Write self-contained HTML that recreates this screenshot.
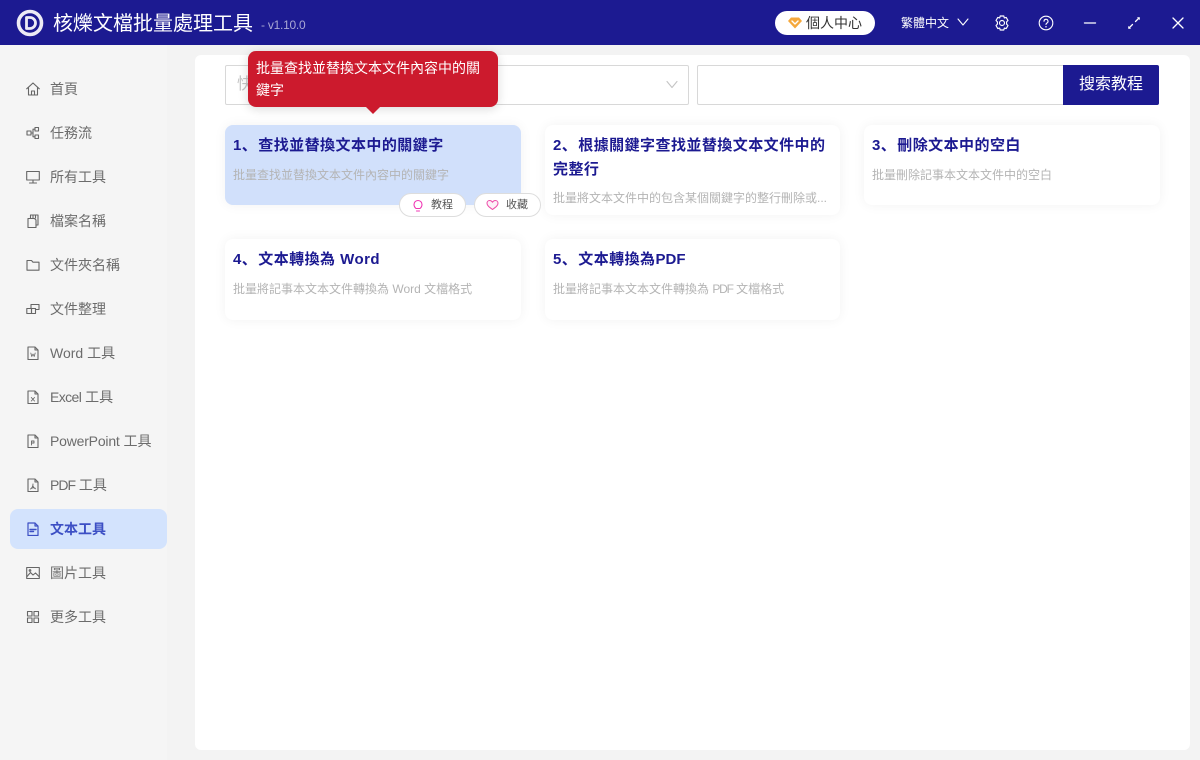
<!DOCTYPE html>
<html lang="zh-CN"><head><meta charset="utf-8"><title>核爍文檔批量處理工具</title>
<style>
*{box-sizing:border-box;margin:0;padding:0}
html,body{width:1200px;height:760px;overflow:hidden}
body{position:relative;background:#f3f3f3;font-family:"Liberation Sans","Noto Sans CJK SC","Noto Sans CJK TC",sans-serif;color:#666}
.a{position:absolute;white-space:nowrap}
svg{position:absolute;fill:none;stroke-linecap:round;stroke-linejoin:round}
#top{left:0;top:0;width:1200px;height:45px;background:#1c1a91}
.nav{position:absolute;left:50px;font-size:14px;line-height:20px;color:#6c6c6c;white-space:nowrap}
.ic{stroke:#666;stroke-width:1.1}
#main{left:195px;top:55px;width:995px;height:695px;background:#fff;border-radius:6px}
.card{position:absolute;background:#fff;border-radius:8px;box-shadow:0 0 12px rgba(0,0,0,.055);width:296px;height:81px}
.t{position:absolute;left:233px;font-size:15px;font-weight:700;line-height:24px;color:#1c1a91;white-space:nowrap;letter-spacing:.45px}
.t i{font-style:normal;margin-right:1px}
.d{position:absolute;font-size:12px;line-height:18px;color:#b4b4b4;white-space:nowrap}
.pill{position:absolute;top:193px;height:24px;background:#fff;border:1px solid #ddd;border-radius:12px;font-size:11px;line-height:22px;color:#555}
</style></head><body>
<div class="a" style="left:0;top:45px;width:167px;height:715px;background:#f5f5f5"></div>
<div class="a" id="top"></div>
<svg style="left:15px;top:8px" width="30" height="30" viewBox="0 0 30 30"><circle cx="15" cy="15" r="11.500" stroke="#ecebf5" stroke-width="3.600"/><path d="M11.500 9.500h3.500a5.500 5.500 0 0 1 0 11h-3.500z" stroke="#ecebf5" stroke-width="2.800"/></svg>
<div class="a" style="left:53px;top:9px;font-size:20px;line-height:30px;color:#fff">核爍文檔批量處理工具</div>
<div class="a" style="left:261px;top:16px;font-size:12px;line-height:18px;color:#a9a8d4;letter-spacing:-.25px">- v1.10.0</div>
<div class="a" style="left:775px;top:11px;width:100px;height:24px;background:#fff;border-radius:12px"></div>
<svg style="left:787px;top:16px" width="16" height="14" viewBox="0 0 16 14"><path d="M4 1.500h8L15 5 8 12.500 1 5z" fill="#f5a83c"/><path d="M5 5l3 3 3-3" stroke="#fff" stroke-width="1.400"/></svg>
<div class="a" style="left:806px;top:13px;font-size:14px;line-height:20px;color:#333">個人中心</div>
<div class="a" style="left:901px;top:14px;font-size:12px;line-height:18px;color:#fff">繁體中文</div>
<svg style="left:957px;top:17px" width="12" height="10" viewBox="0 0 12 10"><path d="M1 2l5 6 5-6" stroke="#fff" stroke-width="1.100"/></svg>
<svg style="left:993px;top:14px" width="18" height="18" viewBox="0 0 18 18" stroke="#fff" stroke-width="1.150"><path d="M7.200 2h3.600l.5 1.900 1.900-.5 1.800 3.100-1.400 1.400v2.200l1.400 1.400-1.800 3.100-1.900-.5-.5 1.900H7.200l-.5-1.900-1.900.5L3 11.500l1.400-1.400V7.900L3 6.500l1.800-3.100 1.900.5z"/><circle cx="9" cy="9" r="2.500"/></svg>
<svg style="left:1038px;top:15px" width="16" height="16" viewBox="0 0 16 16" stroke="#fff" stroke-width="1.100"><circle cx="8" cy="8" r="6.800"/><path d="M6 6.300a2 2 0 1 1 3 1.700c-.7.400-1 .8-1 1.500"/><path d="M8 11.700v.1" stroke-width="1.500"/></svg>
<svg style="left:1083px;top:16px" width="14" height="14" viewBox="0 0 14 14"><path d="M1.500 7h11" stroke="#dcdcf0" stroke-width="1.400"/></svg>
<svg style="left:1127px;top:16px" width="14" height="14" viewBox="0 0 14 14"><path d="M2 12l3.500-3.500M8.500 5.500L12 2" stroke="#fff" stroke-width="1.300"/><path d="M1.500 10.500v2h2z M12.500 3.500v-2h-2z" fill="#fff" stroke="#fff" stroke-width=".6"/></svg>
<svg style="left:1171px;top:16px" width="14" height="14" viewBox="0 0 14 14"><path d="M2 2l10 10M12 2L2 12" stroke="#fff" stroke-width="1.300"/></svg>

<div class="a" style="left:10px;top:509px;width:157px;height:40px;background:#d3e3fd;border-radius:8px"></div>
<div class="nav" style="top:79px">首頁</div>
<div class="nav" style="top:123px">任務流</div>
<div class="nav" style="top:167px">所有工具</div>
<div class="nav" style="top:211px">檔案名稱</div>
<div class="nav" style="top:255px">文件夾名稱</div>
<div class="nav" style="top:299px">文件整理</div>
<div class="nav" style="top:343px">Word 工具</div>
<div class="nav" style="top:387px"><span style="letter-spacing:-.6px">Excel</span> 工具</div>
<div class="nav" style="top:431px"><span style="letter-spacing:-.2px">PowerPoint</span> 工具</div>
<div class="nav" style="top:475px"><span style="letter-spacing:-1px">PDF</span> 工具</div>
<div class="nav" style="top:519px;color:#3c4fc4;font-weight:700">文本工具</div>
<div class="nav" style="top:563px">圖片工具</div>
<div class="nav" style="top:607px">更多工具</div>

<svg class="ic" style="left:26px;top:82px" width="14" height="14" viewBox="0 0 14 14"><path d="M.7 6.800L7 1l6.300 5.800M2.500 5.500v7.500h9V5.500M5.500 13V9h3v4"/></svg>
<svg class="ic" style="left:26px;top:126px" width="14" height="14" viewBox="0 0 14 14"><rect x="1" y="5" width="4" height="4"/><rect x="9" y="1.500" width="3.500" height="3.500"/><rect x="9" y="9" width="3.500" height="3.500"/><path d="M5 7h2V3.200h2M7 7v3.800h2"/></svg>
<svg class="ic" style="left:26px;top:170px" width="14" height="14" viewBox="0 0 14 14"><rect x=".7" y="1.500" width="12.600" height="8.500"/><path d="M7 10v3M3.500 13h7"/></svg>
<svg class="ic" style="left:26px;top:214px" width="14" height="14" viewBox="0 0 14 14"><path d="M2 4.500h6.500l1.500 1.500v7.500H2zM4.500 4.500V1h7.500v10h-2M7 1v3M9.500 1v3"/></svg>
<svg class="ic" style="left:26px;top:258px" width="14" height="14" viewBox="0 0 14 14"><path d="M1 2.500h4.500L7 4.200h6v8H1z"/></svg>
<svg class="ic" style="left:26px;top:302px" width="14" height="14" viewBox="0 0 14 14"><rect x=".8" y="6.500" width="4.700" height="5"/><rect x="5.500" y="6.500" width="4" height="5"/><path d="M5 6.500V2.500h8v5h-3.500"/></svg>
<svg class="ic" style="left:26px;top:346px" width="14" height="14" viewBox="0 0 14 14"><path d="M2 1h7l3 3v9.500H2zM9 1v3h3"/><path d="M4.800 7l1 3.500L7 8l1.200 2.500L9.200 7" stroke-width=".8"/></svg>
<svg class="ic" style="left:26px;top:390px" width="14" height="14" viewBox="0 0 14 14"><path d="M2 1h7l3 3v9.500H2zM9 1v3h3"/><path d="M5.300 7.500l3.200 3.500M8.500 7.500L5.300 11" stroke-width=".9"/></svg>
<svg class="ic" style="left:26px;top:434px" width="14" height="14" viewBox="0 0 14 14"><path d="M2 1h7l3 3v9.500H2zM9 1v3h3"/><path d="M5.500 11V7h2.500v2H5.500" stroke-width=".9"/></svg>
<svg class="ic" style="left:26px;top:478px" width="14" height="14" viewBox="0 0 14 14"><path d="M2 1h7l3 3v9.500H2zM9 1v3h3"/><path d="M7 6c0 2-1 4-2.500 5M7 8c.5 1.500 1.500 2.500 2.500 2.800M5 10.500c1-.500 3-.800 4-.500" stroke-width=".9"/></svg>
<svg style="left:26px;top:522px;stroke:#3c4fc4;stroke-width:1.200" width="14" height="14" viewBox="0 0 14 14"><path d="M2 1h7l3 3v9.500H2zM9 1v3h3"/><path d="M4 7.500h6M4 9.500h3.500" stroke-width="1.400"/></svg>
<svg class="ic" style="left:26px;top:566px" width="14" height="14" viewBox="0 0 14 14"><rect x=".7" y="1.500" width="12.600" height="11"/><path d="M1 10.500l3.500-4 2.500 2.500 2.500-2 3.500 3.500"/><circle cx="4" cy="4.500" r=".8"/></svg>
<svg class="ic" style="left:26px;top:610px" width="14" height="14" viewBox="0 0 14 14"><rect x="1.500" y="1.500" width="4.500" height="4.500"/><rect x="8" y="1.500" width="4.500" height="4.500"/><rect x="1.500" y="8" width="4.500" height="4.500"/><rect x="8" y="8" width="4.500" height="4.500"/></svg>

<div class="a" id="main"></div>
<div class="a" style="left:225px;top:65px;width:464px;height:40px;border:1px solid #d8d8d8;border-radius:2px"></div>
<div class="a" style="left:237px;top:74px;font-size:16px;line-height:22px;color:#c4c4c4">快</div>
<svg style="left:666px;top:80px" width="12" height="10" viewBox="0 0 12 10"><path d="M1 1.500l5 6 5-6" stroke="#c4c4c4" stroke-width="1.100"/></svg>
<div class="a" style="left:697px;top:65px;width:370px;height:40px;border:1px solid #d8d8d8;border-radius:2px"></div>
<div class="a" style="left:1063px;top:65px;width:96px;height:40px;background:#1c1a91;border-radius:0 2px 2px 0;color:#fff;font-size:16px;line-height:40px;text-align:center">搜索教程</div>

<div class="card" style="left:225px;top:125px;height:80px;background:#d1e0fb"></div>
<div class="card" style="left:545px;top:125px;width:295px;height:90px"></div>
<div class="card" style="left:864px;top:125px;height:80px"></div>
<div class="card" style="left:225px;top:239px"></div>
<div class="card" style="left:545px;top:239px;width:295px"></div>
<div class="t" style="top:134px"><i>1、</i>查找並替換文本中的關鍵字</div>
<div class="d" style="left:233px;top:166px">批量查找並替換文本文件內容中的關鍵字</div>
<div class="t" style="left:553px;top:134px"><i>2、</i>根據關鍵字查找並替換文本文件中的</div>
<div class="t" style="left:553px;top:158px">完整行</div>
<div class="d" style="left:553px;top:189px">批量將文本文件中的包含某個關鍵字的整行刪除或...</div>
<div class="t" style="left:872px;top:134px"><i>3、</i>刪除文本中的空白</div>
<div class="d" style="left:872px;top:166px">批量刪除記事本文本文件中的空白</div>
<div class="t" style="top:248px"><i>4、</i>文本轉換為 Word</div>
<div class="d" style="left:233px;top:280px">批量將記事本文本文件轉換為 Word 文檔格式</div>
<div class="t" style="left:553px;top:248px"><i>5、</i>文本轉換為<span style="letter-spacing:0">PDF</span></div>
<div class="d" style="left:553px;top:280px">批量將記事本文本文件轉換為 <span style="letter-spacing:-1.2px">PDF</span> 文檔格式</div>

<div class="pill" style="left:399px;width:67px;padding-left:31px">教程</div>
<div class="pill" style="left:474px;width:67px;padding-left:31px">收藏</div>
<svg style="left:412px;top:199px" width="12" height="13" viewBox="0 0 12 13"><path d="M4 9.500C2.800 8.500 2 7.500 2 5.500a4 4 0 0 1 8 0c0 2-.8 3-2 4zM4.500 12h3" stroke="#f038b4" stroke-width="1.100"/></svg>
<svg style="left:486px;top:199px" width="13" height="12" viewBox="0 0 13 12"><path d="M6.500 10.500C3 8 1 6.500 1 4.200 1 2.500 2.300 1.500 3.700 1.500c1.200 0 2.200.7 2.800 1.700.6-1 1.600-1.700 2.800-1.700C10.700 1.500 12 2.500 12 4.200c0 2.300-2 3.800-5.500 6.300z" stroke="#ee4aa8" fill="#fdf0f8"/></svg>

<div class="a" style="left:248px;top:51px;width:250px;height:56px;background:#cc1a2d;border-radius:8px;box-shadow:0 2px 10px rgba(0,0,0,.15)"></div>
<div class="a" style="left:365px;top:106px;width:16px;height:8px;background:#cc1a2d;clip-path:polygon(0 0,100% 0,50% 100%)"></div>
<div class="a" style="left:256px;top:57px;font-size:14px;line-height:22px;color:#fff;width:232px;white-space:normal">批量查找並替換文本文件內容中的關鍵字</div>
</body></html>
